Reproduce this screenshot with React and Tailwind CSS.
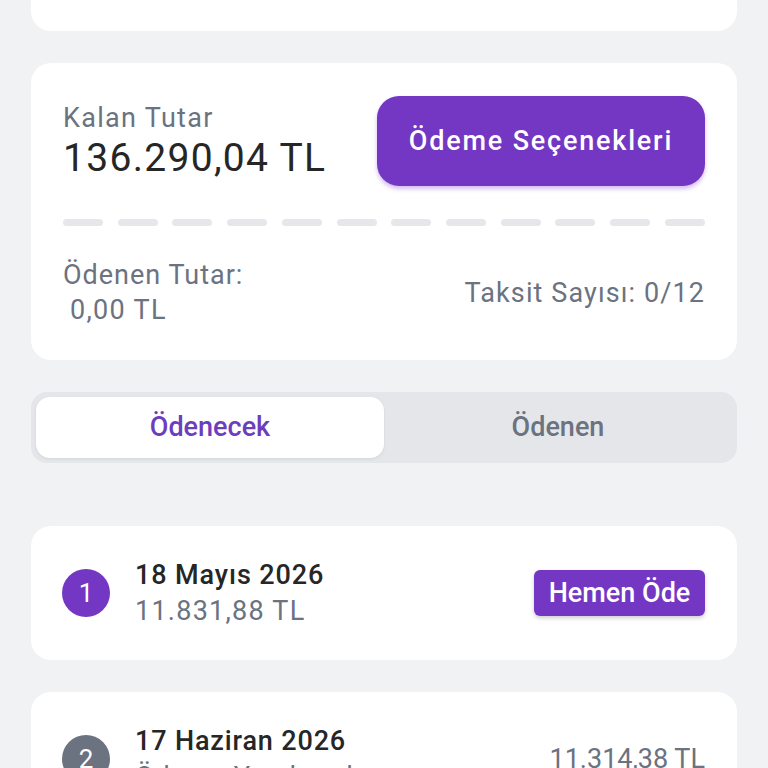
import React from "react";

const font = { fontFamily: "Roboto, 'Noto Sans', sans-serif" };

function Dashes() {
  return (
    <div className="flex justify-between mt-[33px]">
      {Array.from({ length: 12 }).map((_, i) => (
        <div key={i} className="h-[7px] w-[40px] rounded-full bg-[#e6e7ea]" />
      ))}
    </div>
  );
}

export default function App() {
  return (
    <div
      className="h-[768px] w-[768px] overflow-hidden bg-[#f1f2f4] px-[31px]"
      style={font}
    >
      <div className="flex flex-col">
        <div className="-mt-[80px] h-[111px] rounded-[20px] bg-white" />

        <div className="mt-[32px] rounded-[20px] bg-white px-[32px] pt-[33px] pb-[32px]">
          <div className="flex items-center justify-between">
            <div className="flex flex-col">
              <div className="text-[27px] leading-[34px] tracking-[1.3px] text-[#6b7280]">Kalan Tutar</div>
              <div className="text-[39px] leading-[46px] tracking-[1.3px] text-[#262626]">136.290,04 TL</div>
            </div>
            <button className="flex h-[90px] w-[328px] items-center justify-center rounded-[22px] bg-[#7337c4] text-[27px] font-medium tracking-[1.8px] text-white shadow-[0_3px_4px_rgba(160,110,220,0.45)]">
              Ödeme Seçenekleri
            </button>
          </div>
          <Dashes />
          <div className="mt-[32px] flex items-center justify-between text-[27px] leading-[35px] text-[#6b7280]">
            <div className="flex flex-col">
              <span className="tracking-[1px]">Ödenen Tutar:</span>
              <span className="pl-[7px] tracking-[1.3px]">0,00 TL</span>
            </div>
            <span className="tracking-[1.1px]">Taksit Sayısı: 0/12</span>
          </div>
        </div>

        <div className="mt-[32px] grid grid-cols-2 rounded-[16px] bg-[#e5e6e9] p-[5px]">
          <div className="flex h-[61px] items-center justify-center rounded-[14px] bg-white text-[27px] font-medium text-[#6c3ebd] shadow-[0_1px_3px_rgba(0,0,0,0.08)]">
            Ödenecek
          </div>
          <div className="flex h-[61px] items-center justify-center text-[27px] font-medium text-[#6b7280]">
            Ödenen
          </div>
        </div>

        <div className="mt-[63px] flex items-center justify-between rounded-[20px] bg-white p-[31px] pr-[32px]">
          <div className="flex items-center gap-[25px]">
            <div className="flex h-[48px] w-[48px] items-center justify-center rounded-full bg-[#7337c4] text-[26px] text-white">
              1
            </div>
            <div className="flex flex-col text-[27px] leading-[36px]">
              <span className="font-medium tracking-[0.9px] text-[#262626]">18 Mayıs 2026</span>
              <span className="tracking-[1.25px] text-[#6b7280]">11.831,88 TL</span>
            </div>
          </div>
          <button className="flex h-[46px] w-[171px] items-center justify-center rounded-[6px] bg-[#7337c4] text-[27px] font-medium text-white shadow-[0_2px_4px_rgba(0,0,0,0.2)]">
            Hemen Öde
          </button>
        </div>

        <div className="mt-[32px] flex items-center justify-between rounded-[20px] bg-white p-[31px] pr-[32px]">
          <div className="flex items-center gap-[25px]">
            <div className="flex h-[48px] w-[48px] items-center justify-center rounded-full bg-[#6b7280] text-[26px] text-white">
              2
            </div>
            <div className="flex flex-col text-[27px] leading-[36px]">
              <span className="font-medium tracking-[0.85px] text-[#262626]">17 Haziran 2026</span>
              <span className="tracking-[1px] text-[#6b7280]">Ödeme Yapılmadı</span>
            </div>
          </div>
          <span className="text-[27px] text-[#6b7280]">11.314,38 TL</span>
        </div>
      </div>
    </div>
  );
}
